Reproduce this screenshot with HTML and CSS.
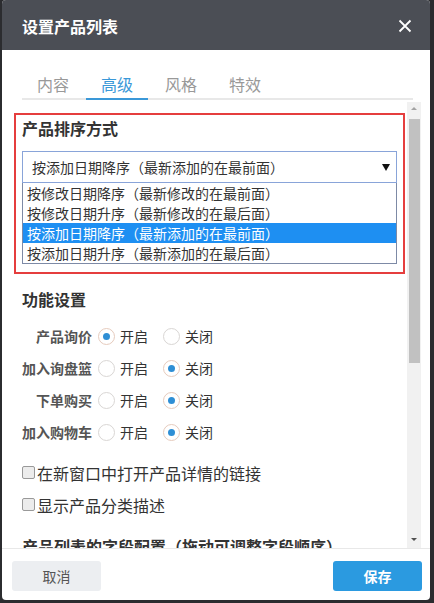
FILE: index.html
```html
<!DOCTYPE html>
<html lang="zh-CN">
<head>
  <meta charset="UTF-8">
  <meta name="viewport" content="width=device-width, initial-scale=1.0">
  <title>设置产品列表</title>
  <link rel="stylesheet" href="styles.css">
</head>
<body>
  <div class="dialog">
    <div class="dialog-head">
      <span class="dialog-title">设置产品列表</span>
      <span class="dialog-close">
        <svg width="14" height="14" viewBox="0 0 14 14">
          <path d="M1.5 1.5 L12.5 12.5 M12.5 1.5 L1.5 12.5" stroke="#fff" stroke-width="1.8" fill="none"/>
        </svg>
      </span>
    </div>

    <ul class="tabs">
      <li class="tab">内容</li>
      <li class="tab active">高级</li>
      <li class="tab">风格</li>
      <li class="tab">特效</li>
    </ul>

    <div class="dialog-body">
      <div class="body-content">
        <div class="section highlight">
          <h3 class="section-title">产品排序方式</h3>
          <div class="select-box">
            <span>按添加日期降序（最新添加的在最前面）</span>
            <span class="select-arrow"></span>
          </div>
          <ul class="select-options">
            <li>按修改日期降序（最新修改的在最前面）</li>
            <li>按修改日期升序（最新修改的在最后面）</li>
            <li class="selected">按添加日期降序（最新添加的在最前面）</li>
            <li>按添加日期升序（最新添加的在最后面）</li>
          </ul>
        </div>

        <div class="section">
          <h3 class="section-title">功能设置</h3>
          <div class="radio-row">
            <span class="row-label">产品询价</span>
            <label class="radio"><span class="radio-dot checked"></span>开启</label>
            <label class="radio"><span class="radio-dot"></span>关闭</label>
          </div>
          <div class="radio-row">
            <span class="row-label">加入询盘篮</span>
            <label class="radio"><span class="radio-dot"></span>开启</label>
            <label class="radio"><span class="radio-dot checked"></span>关闭</label>
          </div>
          <div class="radio-row">
            <span class="row-label">下单购买</span>
            <label class="radio"><span class="radio-dot"></span>开启</label>
            <label class="radio"><span class="radio-dot checked"></span>关闭</label>
          </div>
          <div class="radio-row">
            <span class="row-label">加入购物车</span>
            <label class="radio"><span class="radio-dot"></span>开启</label>
            <label class="radio"><span class="radio-dot checked"></span>关闭</label>
          </div>
        </div>

        <div class="section checks">
          <label class="check-row"><span class="check-box"></span>在新窗口中打开产品详情的链接</label>
          <label class="check-row"><span class="check-box"></span>显示产品分类描述</label>
        </div>

        <div class="section">
          <h3 class="section-title fields-title">产品列表的字段配置（拖动可调整字段顺序）</h3>
        </div>
      </div>

      <div class="scrollbar">
        <span class="scroll-up"></span>
        <span class="scroll-thumb"></span>
        <span class="scroll-space"></span>
        <span class="scroll-down"></span>
      </div>
    </div>

    <div class="dialog-foot">
      <button class="btn btn-cancel">取消</button>
      <button class="btn btn-save">保存</button>
    </div>
  </div>
</body>
</html>
```

FILE: styles.css
```css
body {
  margin: 0;
  height: 603px;
  overflow: hidden;
  background-color: #2b2c2f;
  font-family: "Noto Sans CJK SC", "Noto Sans", sans-serif;
  color: #333;
}

ul {
  list-style: none;
  margin: 0;
  padding: 0;
}

.dialog {
  width: 428px;
  height: 600px;
  margin-left: 2px;
  background-color: #fff;
  border-radius: 4px;
  overflow: hidden;
  display: flex;
  flex-direction: column;
}

.dialog-head {
  height: 50px;
  flex-shrink: 0;
  background-color: #4b4e55;
  display: flex;
  align-items: center;
  justify-content: space-between;
  padding: 0 18px 0 20px;
}

.dialog-title {
  color: #fff;
  font-size: 16px;
  font-weight: bold;
  line-height: 20px;
  margin-top: 2px;
}

.dialog-close {
  display: flex;
  margin-top: 1px;
}

.tabs {
  display: flex;
  gap: 2px;
  margin: 0 17px 0 20px;
  padding-top: 20px;
  border-bottom: 2px solid #e8e8e8;
  flex-shrink: 0;
}

.tab {
  width: 62px;
  text-align: center;
  font-size: 16px;
  line-height: 28px;
  color: #999;
  margin-bottom: -2px;
  border-bottom: 2px solid transparent;
}

.tab.active {
  color: #3a98d8;
  border-bottom-color: #3a98d8;
}

.dialog-body {
  flex: 1;
  display: flex;
  overflow: hidden;
  padding-top: 1px;
}

.body-content {
  flex: 1;
  padding: 12px 0 0 12px;
  overflow: hidden;
}

.section {
  padding: 0 8px;
}

.section-title {
  margin: 15px 0 0;
  font-size: 16px;
  font-weight: bold;
  line-height: 20px;
  color: #333;
  white-space: nowrap;
}

.highlight {
  border: 2px solid #e53e3e;
  padding: 3px 6px 8px;
}

.highlight .section-title {
  margin-top: 0;
}

.select-box {
  margin-top: 13px;
  height: 30px;
  border: 1px solid #89a4d9;
  display: flex;
  align-items: center;
  justify-content: space-between;
  padding: 0 6px 0 9px;
  font-size: 14px;
  color: #333;
}

.select-arrow {
  width: 0;
  height: 0;
  border-left: 4px solid transparent;
  border-right: 4px solid transparent;
  border-top: 7px solid #111;
}

.select-options {
  border: 1px solid #7d8aa6;
  border-top: none;
}

.select-options li {
  font-size: 14px;
  line-height: 20px;
  padding-left: 4px;
  color: #333;
}

.select-options li.selected {
  background-color: #1e8ff2;
  color: #fff;
}

.radio-row {
  display: flex;
  align-items: center;
  height: 32px;
  font-size: 14px;
}

.section-title + .radio-row {
  margin-top: 11px;
}

.row-label {
  width: 70px;
  text-align: right;
  color: #555;
  font-weight: bold;
  margin-right: 6px;
}

.radio {
  display: flex;
  align-items: center;
  gap: 5px;
  margin-right: 15px;
  color: #333;
}

.radio-dot {
  width: 15px;
  height: 15px;
  border: 1px solid #d9d6d4;
  border-radius: 50%;
  display: flex;
  align-items: center;
  justify-content: center;
}

.radio-dot.checked {
  border-color: #e6cbbd;
}

.radio-dot.checked::after {
  content: "";
  width: 7px;
  height: 7px;
  border-radius: 50%;
  background-color: #2f8fd5;
}

.checks {
  margin-top: 9px;
}

.check-row {
  display: flex;
  align-items: center;
  height: 32px;
  font-size: 16px;
  color: #333;
}

.check-box {
  width: 11px;
  height: 11px;
  border: 1px solid #999;
  border-radius: 2px;
  background-color: #ececec;
  margin-right: 2px;
  margin-bottom: 2px;
}

.scrollbar {
  width: 14px;
  margin: 1px 9px 0 2px;
  background-color: #f1f1f1;
  display: flex;
  flex-direction: column;
  align-items: center;
}

.scroll-up,
.scroll-down {
  width: 0;
  height: 0;
  border-left: 3px solid transparent;
  border-right: 3px solid transparent;
}

.scroll-up {
  margin: 5px 0 9px;
  border-bottom: 3px solid #a3a3a3;
}

.scroll-down {
  margin: 9px 0 7px;
  border-top: 3px solid #505050;
}

.scroll-thumb {
  width: 11px;
  height: 244px;
  background-color: #c1c1c1;
}

.scroll-space {
  flex: 1;
}

.dialog-foot {
  height: 52px;
  flex-shrink: 0;
  border-top: 1px solid #e8e8e8;
  display: flex;
  justify-content: space-between;
  padding: 12px 8px 0 10px;
  box-sizing: border-box;
}

.btn {
  width: 89px;
  height: 30px;
  border: none;
  border-radius: 3px;
  font-family: "Noto Sans CJK SC", "Noto Sans", sans-serif;
  font-size: 14px;
  cursor: pointer;
}

.btn-cancel {
  background-color: #eceef1;
  color: #555;
}

.btn-save {
  background-color: #2b9ae0;
  color: #fff;
  font-weight: bold;
}
```
